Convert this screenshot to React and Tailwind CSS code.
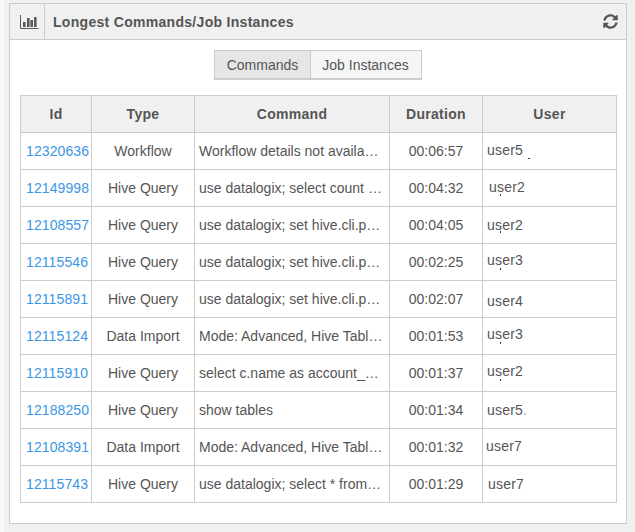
import React from "react";
import { FaSyncAlt } from "react-icons/fa";

const rows = [
  ["12320636", "Workflow", "Workflow details not available", "00:06:57", "user5", "pl-[4px] pb-[2px]", "five", "pr-[7px]"],
  ["12149998", "Hive Query", "use datalogix; select count (*)", "00:04:32", "user2", "pl-[6px] pb-[2px]", "dot", "pr-[7px]"],
  ["12108557", "Hive Query", "use datalogix; set hive.cli.print", "00:04:05", "user2", "pl-[4px]", "dot", "pr-[7px]"],
  ["12115546", "Hive Query", "use datalogix; set hive.cli.print", "00:02:25", "user3", "pl-[4px] pb-[3px]", "dot", "pr-[7px]"],
  ["12115891", "Hive Query", "use datalogix; set hive.cli.print", "00:02:07", "user4", "pl-[4px] pt-[5px]", "", "pr-[7px]"],
  ["12115124", "Data Import", "Mode: Advanced, Hive Table: acc", "00:01:53", "user3", "pl-[4px] pb-[3px]", "dot", "pr-[4px]"],
  ["12115910", "Hive Query", "select c.name as account_name", "00:01:37", "user2", "pl-[4px] pb-[3px]", "dot", "pr-[4px]"],
  ["12188250", "Hive Query", "show tables", "00:01:34", "user5", "pl-[4px]", "period", "pr-[7px]"],
  ["12108391", "Data Import", "Mode: Advanced, Hive Table: acc", "00:01:32", "user7", "pl-[3px] pb-[2px]", "", "pr-[4px]"],
  ["12115743", "Hive Query", "use datalogix; select * from acc", "00:01:29", "user7", "pl-[5px]", "", "pr-[7px]"],
];

function BarIcon() {
  return (
    <svg width="19" height="14" viewBox="0 0 19 14" fill="none">
      <path d="M0.5 0V13.5H18.5" stroke="#5b5b5b" />
      <rect x="3" y="7" width="2.6" height="5" fill="#5b5b5b" />
      <rect x="7" y="3" width="2.6" height="9" fill="#5b5b5b" />
      <rect x="10.4" y="5" width="2.6" height="7" fill="#5b5b5b" />
      <rect x="14" y="2" width="2.6" height="10" fill="#5b5b5b" />
    </svg>
  );
}

export default function App() {
  return (
    <div className="h-[532px] w-[635px] overflow-hidden border-l-4 border-[#f8f8f8] bg-[#f0f0f0] pl-[5px] pr-[8px] pt-[3px] font-['Liberation_Sans',Arial,sans-serif] text-[14px] text-[#555555]">
      <div className="h-[521px] border border-[#cccccc] bg-white">
        <div className="flex h-[36px] items-center border-b border-[#cccccc] bg-[#f0f0f0]">
          <div className="flex h-full w-[35px] items-center justify-start border-r border-[#cccccc] pl-[10px]">
            <BarIcon />
          </div>
          <div className="ml-[8px] flex-1 pt-[2px] text-[14px] font-bold tracking-[0.3px]">Longest Commands/Job Instances</div>
          <FaSyncAlt className="mr-[8px] h-[15px] w-[15px] text-[#555555]" />
        </div>

        <div className="mt-[10px] flex justify-center pr-[1px]">
          <div className="flex h-[30px] border border-b-2 border-[#cccccc] text-[14px]">
            <button className="w-[96px] border-r border-[#cccccc] bg-[#e6e6e6] pl-[1px] pt-[2px] text-center">Commands</button>
            <button className="w-[110px] bg-[#f5f5f5] pt-[2px] text-center">Job Instances</button>
          </div>
        </div>

        <div className="mx-[10px] mt-[15px]">
          <table className="w-[596px] table-fixed border-collapse border border-[#cccccc]">
            <colgroup>
              <col className="w-[71px]" />
              <col className="w-[103px]" />
              <col className="w-[195px]" />
              <col className="w-[93px]" />
              <col className="w-[134px]" />
            </colgroup>
            <thead>
              <tr className="h-[37px] bg-[#f0f0f0] tracking-[0.3px]">
                {["Id", "Type", "Command", "Duration", "User"].map((h) => (
                  <th key={h} className="border border-[#cccccc] text-center font-bold">{h}</th>
                ))}
              </tr>
            </thead>
            <tbody>
              {rows.map((r) => (
                <tr key={r[0]} className="h-[37px]">
                  <td className="border border-[#cccccc] pl-[5px] tracking-[0.1px] text-[#3c96e6]">{r[0]}</td>
                  <td className="border border-[#cccccc] text-center">{r[1]}</td>
                  <td className={`truncate border border-[#cccccc] pl-[4px] ${r[7]}`}>{r[2]}</td>
                  <td className="border border-[#cccccc] text-center">{r[3]}</td>
                  <td className={`relative border border-[#cccccc] tracking-[0.2px] ${r[5]}`}>
                    {r[4]}
                    {r[6] === "period" && <span className="text-[#999999]">.</span>}
                    {r[6] === "five" && <span className="absolute left-[45px] top-[25px] h-px w-[2px] bg-[#333333]" />}
                    {r[6] === "dot" && <span className="absolute left-[17px] top-[24px] h-[2px] w-px bg-[#333333]" />}
                  </td>
                </tr>
              ))}
            </tbody>
          </table>
        </div>
      </div>
    </div>
  );
}
